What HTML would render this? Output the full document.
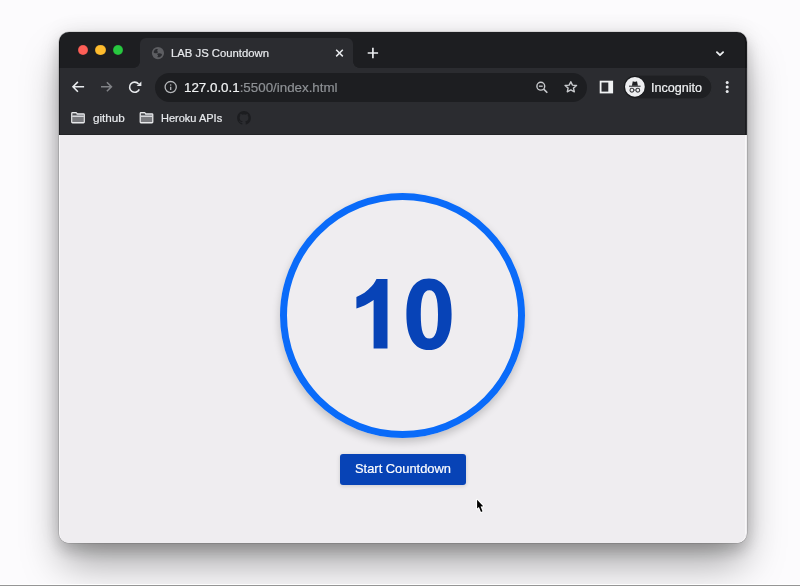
<!DOCTYPE html>
<html><head><meta charset="utf-8">
<style>
*{box-sizing:border-box;margin:0;padding:0}
html,body{width:800px;height:586px;overflow:hidden;background:#fcfbfd;font-family:"Liberation Sans",sans-serif}
.abs{position:absolute}
.botline{position:absolute;left:0;top:584px;width:800px;height:2px;background:linear-gradient(#fff 0 1px,#959595 1px)}
.win{position:absolute;left:58.8px;top:31.5px;width:688.1px;height:511px;border-radius:10px;overflow:hidden;background:#efedf0;
 box-shadow:0 0 0 0.6px rgba(0,0,0,.18),0 0 22px rgba(0,0,0,.09),0 8px 14px rgba(0,0,0,.14),0 24px 40px -4px rgba(0,0,0,.36)}
.strip{position:absolute;left:0;top:0;width:688px;height:37px;background:#1d1e21}
.tl{position:absolute;top:13.9px;width:10.6px;height:10.6px;border-radius:50%;box-shadow:inset 0 0 0 0.5px rgba(0,0,0,.15)}
.tab{position:absolute;left:81.5px;top:7px;width:213px;height:30px;background:#2b2c30;border-radius:6px 6px 0 0}
.tab:before,.tab:after{content:"";position:absolute;bottom:0;width:6px;height:6px}
.tab:before{left:-6px;background:radial-gradient(circle at 0 0,transparent 5.5px,#2b2c30 6px)}
.tab:after{right:-6px;background:radial-gradient(circle at 100% 0,transparent 5.5px,#2b2c30 6px)}
.t{position:absolute;line-height:0;white-space:nowrap;will-change:transform;-webkit-text-stroke:0.2px currentColor}
.toolbar{position:absolute;left:0;top:37px;width:688px;height:67px;background:#2b2c30}
.omni{position:absolute;left:96px;top:41.5px;width:432px;height:29px;border-radius:14.5px;background:#1d1e21}
.pill{position:absolute;left:564.5px;top:43.5px;width:88.5px;height:24px;border-radius:12px;background:#1f2023;box-shadow:inset 0 0 0 0.6px rgba(255,255,255,.07)}
.content{position:absolute;left:0;top:104px;width:687.5px;height:408.5px;background:#efedf0;border-radius:0 0 10px 10px;box-shadow:0 -0.5px 0 rgba(0,0,0,.4),inset 1px 0 0 rgba(255,255,255,.55),inset -1px 0 0 rgba(255,255,255,.55),inset 0 -1px 0 rgba(255,255,255,.55)}
.rimd{position:absolute;left:0;top:0;width:687.5px;height:104px;border-radius:10px 10px 0 0;box-shadow:inset 1px 0 0 rgba(0,0,0,.35),inset -1px 0 0 rgba(0,0,0,.35),inset 0 1px 0 rgba(0,0,0,.45);pointer-events:none}
.ring{position:absolute;left:221.4px;top:162.4px;width:245px;height:245px;border-radius:50%;border:7px solid #0a6bf9;box-shadow:0 4px 9px rgba(0,0,0,.2)}
.btn{position:absolute;left:280.6px;top:422.6px;width:126.4px;height:31px;border-radius:3px;background:#0743b6;box-shadow:0 1px 4px rgba(0,0,0,.15)}
svg{position:absolute;overflow:visible}
.in{position:absolute;left:0.2px;top:-0.5px;width:688px;height:512px}
</style></head><body>
<div class="win"><div class="in">
  <div class="strip"></div>
  <div class="tl" style="left:18.55px;background:#fe5f57"></div>
  <div class="tl" style="left:36.3px;background:#febc2e"></div>
  <div class="tl" style="left:53.8px;background:#28c840"></div>
  <div class="tab"></div>
  <!-- globe -->
  <svg style="left:0;top:0" width="688" height="512">
    <circle cx="98.95" cy="22.1" r="6.1" fill="#5d5e62"/>
    <path d="M94.6 21C95.1 19.5 96 18.6 97 18.1C97.7 18 98.4 18.1 98.9 18.3C98.6 18.8 98.2 19.3 98.2 19.8C98.3 20.4 98.8 20.8 98.9 21.2C98.6 21.8 97.9 22.2 97.2 22.2C96.4 22.2 95.6 22.1 95.1 21.9C94.8 21.6 94.6 21.3 94.6 21Z" fill="#2b2c30"/>
    <path d="M97.9 22.9C98.6 22.4 99.3 22.2 100.1 22.2C101 22.3 102.1 22.6 102.9 22.9C102.9 23.5 102.8 24 102.7 24.5C102.2 25.3 101.4 25.8 100.5 26.2C99.7 26.3 98.9 26.2 98.2 26C98.5 25.5 99.1 25 99.1 24.5C99 23.9 98.3 23.4 97.9 22.9Z" fill="#2b2c30"/>
    <!-- close x -->
    <path d="M277.2 18.8l6.6 6.6M283.8 18.8l-6.6 6.6" stroke="#e8eaed" stroke-width="1.5"/>
    <!-- plus -->
    <path d="M313.9 16.8v10.4M308.7 22h10.4" stroke="#e8eaed" stroke-width="1.7"/>
    <!-- chevron -->
    <path d="M657.9 21.1L661 24.2L664.1 21.1" stroke="#eceef0" stroke-width="1.8" stroke-linecap="round" stroke-linejoin="round" fill="none"/>
  </svg>
  <div class="t" style="left:112.3px;top:22.1px;font-size:11.3px;color:#e8eaed">LAB JS Countdown</div>
  <div class="toolbar"></div>
  <div class="omni"></div>
  <div class="pill"></div>
  <svg style="left:0;top:0" width="688" height="512">
    <!-- back -->
    <path d="M25.1 55.8H14M18.9 50.9L14 55.8l4.9 4.9" stroke="#e8eaed" stroke-width="1.6" fill="none"/>
    <!-- forward -->
    <path d="M42 55.8h10.4M47.9 51.3l4.5 4.5-4.5 4.5" stroke="#808286" stroke-width="1.6" fill="none"/>
    <!-- reload -->
    <path d="M79.6 52.9A5.1 5.1 0 1 0 80.3 58.4" stroke="#e8eaed" stroke-width="1.6" fill="none"/>
    <path d="M82.4 50.4v4.7h-4.7z" fill="#e8eaed"/>
    <!-- info -->
    <circle cx="111.7" cy="56.1" r="5.6" stroke="#b4b6b9" stroke-width="1.3" fill="none"/>
    <path d="M111.7 55.7v3.4" stroke="#b4b6b9" stroke-width="1.3"/>
    <circle cx="111.7" cy="54" r="0.75" fill="#b4b6b9"/>
    <!-- zoom -->
    <circle cx="481.8" cy="55.2" r="3.9" stroke="#c8cacd" stroke-width="1.4" fill="none"/>
    <path d="M484.7 58.1l3.6 3.6" stroke="#c8cacd" stroke-width="1.6"/>
    <path d="M479.9 55.2h3.8" stroke="#c8cacd" stroke-width="1.3"/>
    <!-- star -->
    <path d="M511.80 50.70 L513.46 54.16 L517.51 54.56 L514.48 57.09 L515.33 60.79 L511.80 58.90 L508.27 60.79 L509.12 57.09 L506.09 54.56 L510.14 54.16Z" stroke="#c8cacd" stroke-width="1.4" fill="none" stroke-linejoin="round"/>
    <!-- side panel -->
    <rect x="541.6" y="50.6" width="11.6" height="10.9" stroke="#f1f3f4" stroke-width="1.8" fill="none"/>
    <rect x="549.3" y="50.6" width="3.9" height="10.9" fill="#f1f3f4"/>
    <!-- avatar -->
    <circle cx="575.9" cy="55.8" r="10.6" fill="#141518"/><circle cx="575.9" cy="55.8" r="9.9" fill="#eeeff1"/>
    <path d="M570 55.3h11.6" stroke="#606164" stroke-width="1.5"/>
    <path d="M572.9 54.7l.9-4.4 1.3.5h1.6l1.3-.5.9 4.4z" fill="#1f2023"/>
    <circle cx="572.9" cy="59.2" r="1.9" stroke="#3c3d40" stroke-width="1.1" fill="none"/>
    <circle cx="578.8" cy="59.2" r="1.9" stroke="#3c3d40" stroke-width="1.1" fill="none"/>
    <path d="M574.8 59h2.1" stroke="#3c3d40" stroke-width="1"/>
    <!-- menu dots -->
    <circle cx="668.2" cy="51.6" r="1.5" fill="#e8eaed"/>
    <circle cx="668.2" cy="56" r="1.5" fill="#e8eaed"/>
    <circle cx="668.2" cy="60.4" r="1.5" fill="#e8eaed"/>
    <!-- folders -->
    <g><rect x="13.3" y="82.9" width="11.4" height="3" fill="#9a9ca1"/><rect x="13.3" y="82.3" width="4.2" height="1.3" fill="#141518"/><rect x="13.3" y="85.9" width="11.4" height="5.3" fill="#78797d"/><path d="M12.75 82.5Q12.75 81.75 13.5 81.75H17.2L18.4 82.9H24.5Q25.25 82.9 25.25 83.6V91Q25.25 91.75 24.5 91.75H13.5Q12.75 91.75 12.75 91Z" stroke="#e8e9eb" stroke-width="1.3" fill="none" stroke-linejoin="round"/><path d="M13.2 85.5h11.6" stroke="#d6d7da" stroke-width="1"/></g>
    <g transform="translate(68.5 0)"><rect x="13.3" y="82.9" width="11.4" height="3" fill="#9a9ca1"/><rect x="13.3" y="82.3" width="4.2" height="1.3" fill="#141518"/><rect x="13.3" y="85.9" width="11.4" height="5.3" fill="#78797d"/><path d="M12.75 82.5Q12.75 81.75 13.5 81.75H17.2L18.4 82.9H24.5Q25.25 82.9 25.25 83.6V91Q25.25 91.75 24.5 91.75H13.5Q12.75 91.75 12.75 91Z" stroke="#e8e9eb" stroke-width="1.3" fill="none" stroke-linejoin="round"/><path d="M13.2 85.5h11.6" stroke="#d6d7da" stroke-width="1"/></g>
    <!-- github -->
    <path transform="translate(178.1 80.1) scale(0.8625)" fill="#1c1d20" d="M8 0C3.58 0 0 3.58 0 8c0 3.54 2.29 6.53 5.47 7.59.4.07.55-.17.55-.38 0-.19-.01-.82-.01-1.49-2.01.37-2.53-.49-2.69-.94-.09-.23-.48-.94-.82-1.13-.28-.15-.68-.52-.01-.53.63-.01 1.08.58 1.23.82.72 1.21 1.87.87 2.33.66.07-.52.28-.87.51-1.07-1.78-.2-3.64-.89-3.64-3.95 0-.87.31-1.59.82-2.15-.08-.2-.36-1.02.08-2.12 0 0 .67-.21 2.2.82.64-.18 1.32-.27 2-.27.68 0 1.36.09 2 .27 1.53-1.04 2.2-.82 2.2-.82.44 1.1.16 1.92.08 2.12.51.56.82 1.27.82 2.15 0 3.07-1.87 3.75-3.65 3.95.29.25.54.73.54 1.48 0 1.07-.01 1.93-.01 2.2 0 .21.15.46.55.38A8.013 8.013 0 0016 8c0-4.42-3.58-8-8-8z"/>
  </svg>
  <div class="t" style="left:125px;top:56.6px;font-size:13.35px;color:#f1f3f4">127.0.0.1<span style="color:#8e9195">:5500/index.html</span></div>
  <div class="t" style="left:591.7px;top:56.8px;font-size:12.6px;color:#f1f3f4">Incognito</div>
  <div class="t" style="left:33.8px;top:86.6px;font-size:11.7px;color:#e8eaed">github</div>
  <div class="t" style="left:101.7px;top:86.6px;font-size:11px;color:#e8eaed">Heroku APIs</div>
  <div class="rimd"></div>
  <div class="content"></div>
  <div class="ring"></div>
  <svg style="left:0;top:0" width="688" height="512">
    <path d="M328.5 247.9V317.6H314.6V269C309 273 303 276 297.4 277.5V266C305 263 313 257 317.5 247.9Z" fill="#0743b7"/>
    <path fill-rule="evenodd" fill="#0743b7" d="M370 247.4C384.7 247.4 392.6 259.9 392.6 283.2C392.6 306.5 384.7 319 370 319C355.3 319 347.4 306.5 347.4 283.2C347.4 259.9 355.3 247.4 370 247.4ZM370.4 259.3C364.3 259.3 361.8 267 361.8 283.45C361.8 300 364.3 307.6 370.4 307.6C376.5 307.6 379 300 379 283.45C379 267 376.5 259.3 370.4 259.3Z"/>
  </svg>
  <div class="btn"></div>
  <div class="t" style="left:295.9px;top:437.7px;font-size:12.9px;color:#fff">Start Countdown</div>
  <!-- cursor -->
  <svg style="left:0;top:0" width="688" height="512">
    <path d="M418.1 468.8V477.6L419.9 475.9L422 480.9L423.5 480.2L421.6 475.5L424.2 475.2Z" fill="#000" stroke="#fff" stroke-width="2" paint-order="stroke" stroke-linejoin="round"/>
  </svg>
</div></div>
<div class="botline"></div>
</body></html>
